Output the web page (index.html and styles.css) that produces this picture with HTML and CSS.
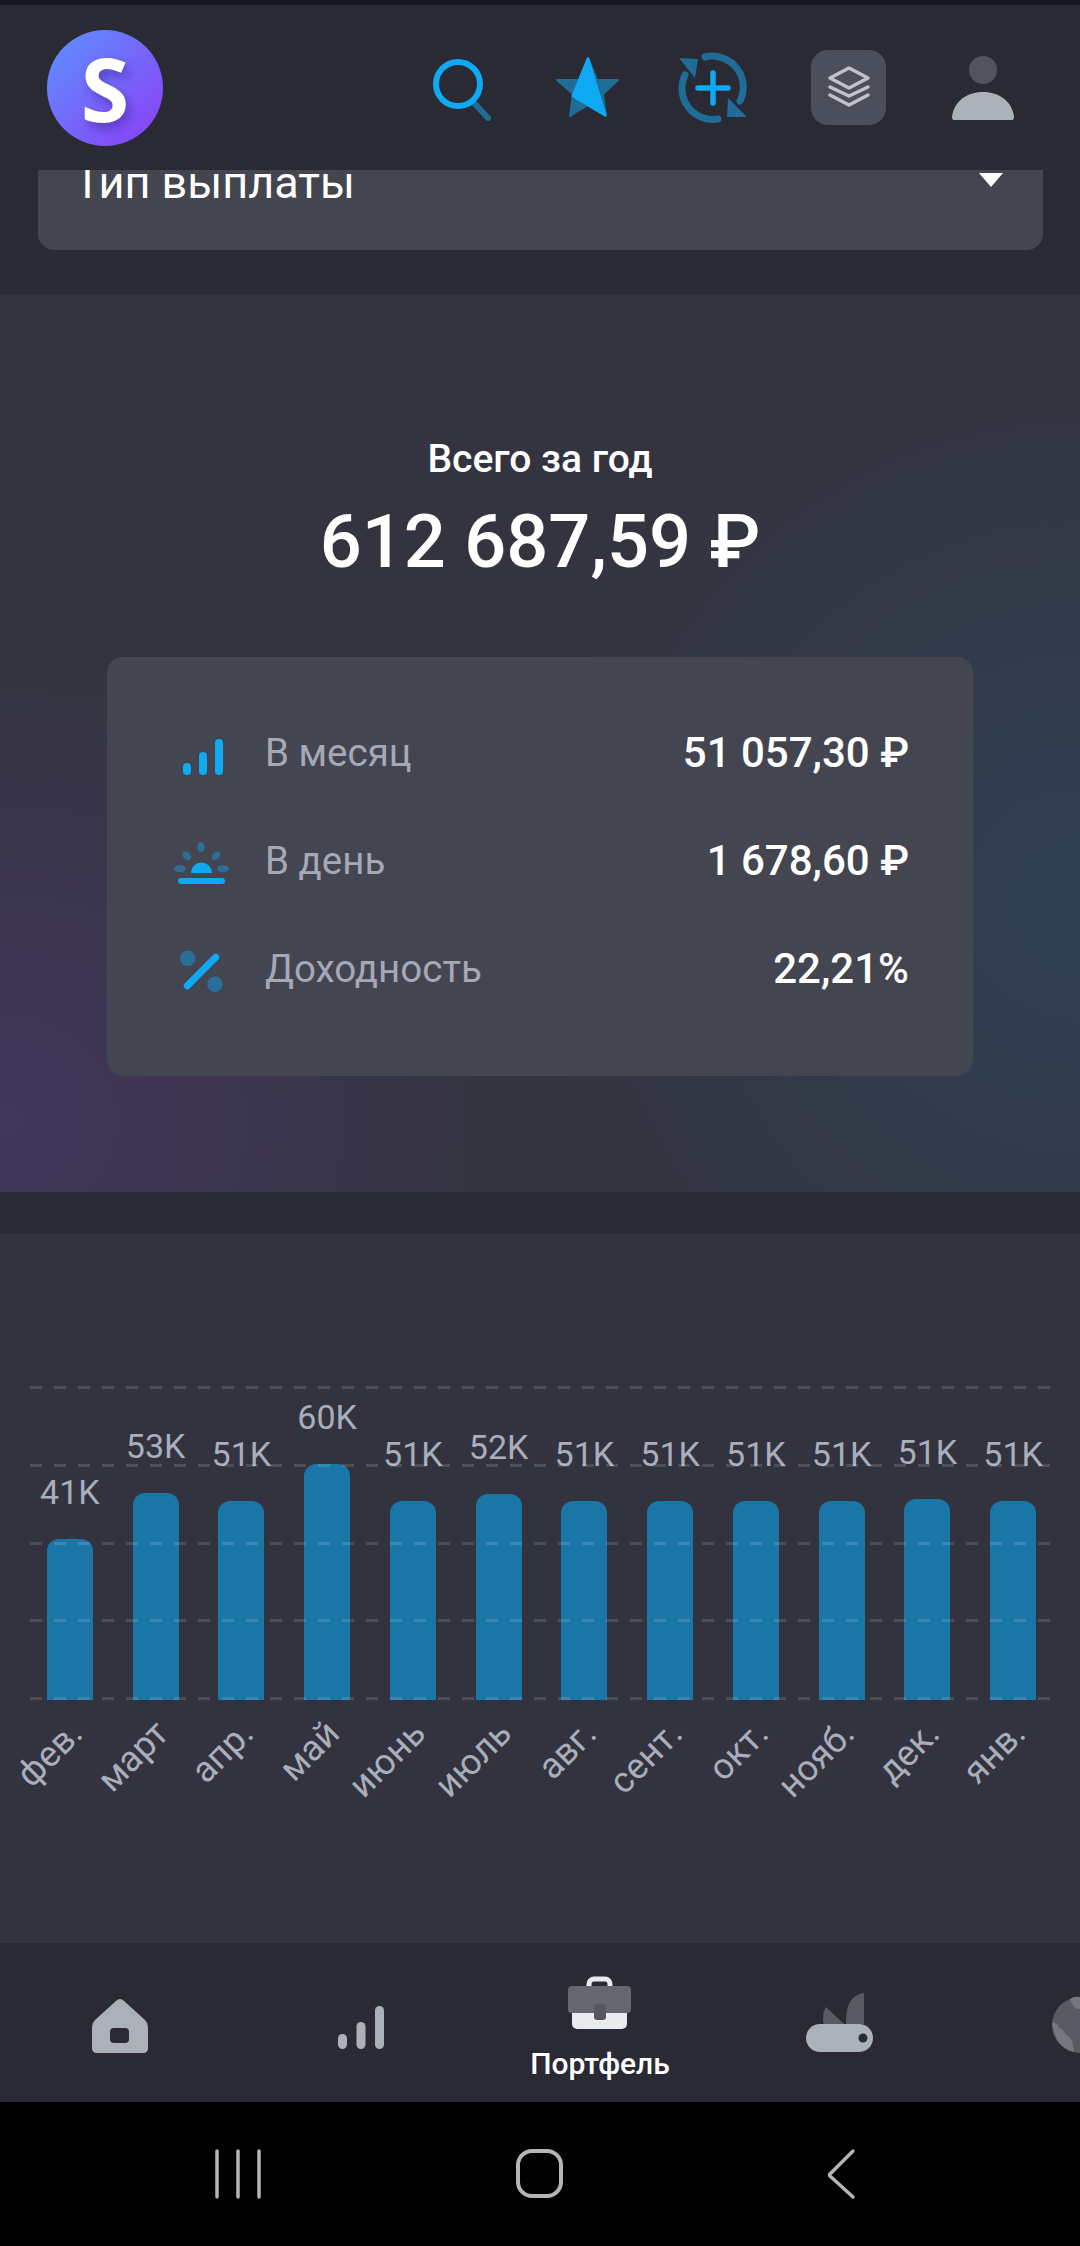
FILE: index.html
```html
<!DOCTYPE html>
<html lang="ru">
<head>
    <meta charset="UTF-8">
    <meta name="viewport" content="width=device-width, initial-scale=1.0">
    <title>Портфель</title>
    <link rel="stylesheet" href="styles.css">
</head>
<body>
    <div class="status-strip"></div>

    <header class="topbar">
        <div class="logo">S</div>
        <div class="top-icons">
            <div class="top-slot">
                <svg class="top-icon" viewBox="0 0 100 100">
                    <path d="M67 66 L80 80" fill="none" stroke="#1f6c96" stroke-width="6" stroke-linecap="round"/>
                    <circle cx="50" cy="46" r="22" fill="none" stroke="#0fa8f3" stroke-width="6"/>
                </svg>
            </div>
            <div class="top-slot">
                <svg class="top-icon" viewBox="0 0 100 100">
                    <path d="M50 20 L59 42 L80 42 L65 56 L68 78 L50 67 L32 78 L35 56 L19 42 L41 42 Z" fill="#1f6c96" stroke="#1f6c96" stroke-width="2" stroke-linejoin="round"/>
                    <path d="M50 21 L67 77 L35 58 Z" fill="#0fa8f3" stroke="#0fa8f3" stroke-width="3" stroke-linejoin="round"/>
                </svg>
            </div>
            <div class="top-slot">
                <svg class="top-icon" viewBox="0 0 100 100">
                    <path d="M37 19 A31 31 0 0 1 72 63" fill="none" stroke="#1f6c96" stroke-width="7" stroke-linecap="round"/>
                    <path d="M17 37 A31 31 0 0 0 50 81" fill="none" stroke="#1f6c96" stroke-width="7" stroke-linecap="round"/>
                    <path d="M11 20 L30 21 L27 40 Z" fill="#1f6c96"/>
                    <path d="M79 79 L59 79 L60 60 Z" fill="#1f6c96"/>
                    <path d="M30 50 H60 M45 35 V65" fill="none" stroke="#0fa8f3" stroke-width="5.5" stroke-linecap="round"/>
                </svg>
            </div>
            <div class="top-slot">
                <div class="layers-btn">
                    <svg class="layers-icon" viewBox="0 0 75 75">
                        <path d="M38 18 L57 28 L38 38 L19 28 Z" fill="none" stroke="#bfc3ca" stroke-width="3.5" stroke-linejoin="round"/>
                        <path d="M19 37 L38 46 L57 37 M19 45 L38 55 L57 45" fill="none" stroke="#bfc3ca" stroke-width="3.5" stroke-linecap="round" stroke-linejoin="round"/>
                    </svg>
                </div>
            </div>
            <div class="top-slot">
                <svg class="top-icon" viewBox="0 0 100 100">
                    <circle cx="55" cy="32" r="14" fill="#51535e"/>
                    <path d="M24 79 C26 63 39 54 55 54 C71 54 84 63 86 79 Q86 82 84 82 H26 Q24 82 24 79 Z" fill="#aab1b8"/>
                </svg>
            </div>
        </div>
    </header>

    <div class="filter-wrap">
        <div class="filter">
            <div class="filter-row">
                <span class="filter-name">Тип выплаты</span>
                <span class="filter-arrow"></span>
            </div>
        </div>
    </div>

    <section class="summary">
        <div class="summary-title">Всего за год</div>
        <div class="summary-total">612 687,59 ₽</div>
        <div class="stat-card">
            <div class="stat-row">
                <svg class="stat-icon" viewBox="0 0 60 60">
                    <rect x="12" y="41" width="8" height="12" rx="4" fill="#0fa8f3"/>
                    <rect x="28" y="30" width="8" height="23" rx="4" fill="#0fa8f3"/>
                    <rect x="44" y="17" width="8" height="36" rx="4" fill="#0fa8f3"/>
                </svg>
                <span class="stat-label">В месяц</span>
                <span class="stat-value">51 057,30 ₽</span>
            </div>
            <div class="stat-row">
                <svg class="stat-icon" viewBox="0 0 60 60">
                    <ellipse cx="30" cy="17" rx="3.7" ry="5" fill="#2b6f99"/>
                    <ellipse cx="15.7" cy="25.7" rx="3.5" ry="5" transform="rotate(-45 15.7 25.7)" fill="#2b6f99"/>
                    <ellipse cx="45" cy="25.7" rx="3.5" ry="5" transform="rotate(45 45 25.7)" fill="#2b6f99"/>
                    <ellipse cx="9" cy="38.7" rx="6" ry="3.5" fill="#2b6f99"/>
                    <ellipse cx="52" cy="38.7" rx="6" ry="3.5" fill="#2b6f99"/>
                    <path d="M20 43 A10.5 10.5 0 0 1 41 43 Z" fill="#0fa8f3"/>
                    <rect x="7" y="48" width="47" height="6" rx="3" fill="#0fa8f3"/>
                </svg>
                <span class="stat-label">В день</span>
                <span class="stat-value">1 678,60 ₽</span>
            </div>
            <div class="stat-row">
                <svg class="stat-icon" viewBox="0 0 60 60">
                    <circle cx="16.7" cy="20.3" r="7.7" fill="#2b6f99"/>
                    <circle cx="44" cy="46.3" r="7.7" fill="#2b6f99"/>
                    <path d="M16.3 47.7 L44.7 19.3" stroke="#0fa8f3" stroke-width="7" stroke-linecap="round"/>
                </svg>
                <span class="stat-label">Доходность</span>
                <span class="stat-value">22,21%</span>
            </div>
        </div>
    </section>

    <section class="chart">
        <div class="plot">
            <div class="cols">
                <div class="col"><span class="col-value">41K</span><div class="bar" style="height: 161px"></div></div>
                <div class="col"><span class="col-value">53K</span><div class="bar" style="height: 207px"></div></div>
                <div class="col"><span class="col-value">51K</span><div class="bar" style="height: 199px"></div></div>
                <div class="col"><span class="col-value">60K</span><div class="bar" style="height: 236px"></div></div>
                <div class="col"><span class="col-value">51K</span><div class="bar" style="height: 199px"></div></div>
                <div class="col"><span class="col-value">52K</span><div class="bar" style="height: 206px"></div></div>
                <div class="col"><span class="col-value">51K</span><div class="bar" style="height: 199px"></div></div>
                <div class="col"><span class="col-value">51K</span><div class="bar" style="height: 199px"></div></div>
                <div class="col"><span class="col-value">51K</span><div class="bar" style="height: 199px"></div></div>
                <div class="col"><span class="col-value">51K</span><div class="bar" style="height: 199px"></div></div>
                <div class="col"><span class="col-value">51K</span><div class="bar" style="height: 201px"></div></div>
                <div class="col"><span class="col-value">51K</span><div class="bar" style="height: 199px"></div></div>
            </div>
            <div class="grid">
                <div class="grid-line"></div>
                <div class="grid-line"></div>
                <div class="grid-line"></div>
                <div class="grid-line"></div>
                <div class="grid-line"></div>
            </div>
        </div>
        <div class="months">
            <div class="month-cell"><span class="month">фев.</span></div>
            <div class="month-cell"><span class="month">март</span></div>
            <div class="month-cell"><span class="month">апр.</span></div>
            <div class="month-cell"><span class="month">май</span></div>
            <div class="month-cell"><span class="month">июнь</span></div>
            <div class="month-cell"><span class="month">июль</span></div>
            <div class="month-cell"><span class="month">авг.</span></div>
            <div class="month-cell"><span class="month">сент.</span></div>
            <div class="month-cell"><span class="month">окт.</span></div>
            <div class="month-cell"><span class="month">нояб.</span></div>
            <div class="month-cell"><span class="month">дек.</span></div>
            <div class="month-cell"><span class="month">янв.</span></div>
        </div>
    </section>

    <nav class="tabs">
        <div class="tab">
            <svg class="tab-icon" viewBox="0 0 80 80">
                <path d="M36 15 Q40 11 44 15 L65 34 Q68 37 68 41 V62 Q68 67 63 67 H17 Q12 67 12 62 V41 Q12 37 15 34 Z" fill="#aab1b8"/>
                <rect x="30" y="42" width="19" height="15" rx="4" fill="#292a33"/>
            </svg>
        </div>
        <div class="tab">
            <svg class="tab-icon" viewBox="0 0 80 80">
                <rect x="18" y="48" width="9" height="15" rx="4.5" fill="#aab1b8"/>
                <rect x="36.500" y="36" width="9" height="27" rx="4.5" fill="#aab1b8"/>
                <rect x="55" y="20" width="9" height="43" rx="4.5" fill="#aab1b8"/>
            </svg>
        </div>
        <div class="tab tab-active">
            <svg class="tab-icon-active" viewBox="0 0 80 60">
                <rect x="29" y="6" width="21" height="14" rx="5" fill="none" stroke="#e9ebee" stroke-width="5"/>
                <rect x="12" y="30" width="55" height="26" rx="5" fill="#e9ebee"/>
                <path d="M12 13 H67 Q71 13 71 17 V37 Q71 40 67 40 H12 Q8 40 8 37 V17 Q8 13 12 13 Z" fill="#66676e"/>
                <rect x="34" y="31" width="12" height="16" rx="3" fill="#57585f"/>
            </svg>
            <span class="tab-label">Портфель</span>
        </div>
        <div class="tab">
            <svg class="tab-icon" viewBox="0 0 80 80">
                <path d="M46 38 C46 20 50 9 64 7 V38 Z" fill="#585a63"/>
                <path d="M23 35 Q23 25 26 21 L44 38 H25 Q23 38 23 35 Z" fill="#585a63"/>
                <rect x="6" y="38" width="67" height="28" rx="14" fill="#aab1b8"/>
                <circle cx="63" cy="52" r="4.500" fill="#292a33"/>
            </svg>
        </div>
        <div class="tab">
            <svg class="tab-icon" viewBox="0 0 80 80">
                <circle cx="40" cy="39" r="28" fill="#585a63"/>
                <path d="M12 37 Q17 35 19 42 Q24 42 25 48 Q33 52 33 60 L34 66 Q16 62 12 37 Z" fill="#75777f"/>
                <path d="M30 13 Q34 10 40 11 V23 Q33 24 30 13 Z" fill="#75777f"/>
            </svg>
        </div>
    </nav>

    <footer class="sys-bar">
        <div class="sys-slot">
            <svg class="sys-icon" viewBox="0 0 60 60">
                <path d="M9 7 V53 M30 7 V53 M51 7 V53" fill="none" stroke="#b5b5b5" stroke-width="3.500" stroke-linecap="round"/>
            </svg>
        </div>
        <div class="sys-slot">
            <svg class="sys-icon" viewBox="0 0 60 60">
                <rect x="8" y="7" width="43" height="45" rx="14" fill="none" stroke="#b5b5b5" stroke-width="4"/>
            </svg>
        </div>
        <div class="sys-slot">
            <svg class="sys-icon" viewBox="0 0 60 60">
                <path d="M41 7 L18 30 Q17 31 18 32 L41 53" fill="none" stroke="#b5b5b5" stroke-width="3.500" stroke-linecap="round" stroke-linejoin="round"/>
            </svg>
        </div>
    </footer>
</body>
</html>
```

FILE: styles.css
```css
* {
    box-sizing: border-box;
}
body {
    margin: 0;
    height: 2246px;
    overflow: hidden;
    background-color: #292a33;
    font-family: Roboto, "Noto Sans", sans-serif;
    color: white;
}
.status-strip {
    height: 5px;
    background-color: #151821;
}

/* top bar */
.topbar {
    display: flex;
    align-items: center;
    justify-content: space-between;
    height: 165px;
    padding: 0 37px 0 47px;
    background-color: #292a33;
}
.logo {
    display: flex;
    align-items: center;
    justify-content: center;
    width: 116px;
    height: 116px;
    border-radius: 50%;
    background: linear-gradient(135deg, #5c92ff, #8c3df5);
    font-family: "Open Sans", sans-serif;
    font-size: 88px;
    font-weight: 700;
    text-shadow: 4px 6px 10px rgba(60, 30, 140, 0.45);
}
.top-icons {
    display: flex;
    align-items: center;
}
.top-slot {
    display: flex;
    align-items: center;
    justify-content: center;
    width: 130px;
    height: 100px;
}
.top-icon {
    width: 100px;
    height: 100px;
}
.layers-btn {
    width: 75px;
    height: 75px;
    border-radius: 17px;
    background-color: #4b4e5b;
}
.layers-icon {
    display: block;
    width: 75px;
    height: 75px;
}

/* dropdown cut by the top bar */
.filter-wrap {
    height: 124px;
    padding: 0 37px 0 38px;
}
.filter {
    height: 80px;
    overflow: hidden;
    border-radius: 0 0 16px 16px;
    background-color: #434551;
}
.filter-row {
    display: flex;
    align-items: center;
    justify-content: space-between;
    margin-top: -13px;
    padding: 0 40px 0 36px;
    line-height: 52px;
    font-size: 45px;
}
.filter-arrow {
    margin-top: -6px;
    border-top: 14px solid white;
    border-left: 12.5px solid transparent;
    border-right: 12.5px solid transparent;
}

/* totals */
.summary {
    display: flex;
    flex-direction: column;
    align-items: center;
    height: 898px;
    margin-bottom: 42px;
    padding-top: 143px;
    background-color: #33343f;
    background-image:
        radial-gradient(ellipse 520px 480px at 0% 92%, rgba(80, 56, 120, 0.5), transparent),
        radial-gradient(ellipse 560px 560px at 100% 68%, rgba(44, 76, 104, 0.5), transparent);
}
.summary-title {
    font-size: 39px;
    font-weight: 500;
    line-height: 44px;
}
.summary-total {
    margin-top: 19px;
    font-size: 74px;
    font-weight: 500;
    line-height: 84px;
}
.stat-card {
    width: 866px;
    height: 419px;
    margin-top: 73px;
    padding: 41px 64px 0;
    border-radius: 16px;
    background-color: #434551;
}
.stat-row {
    display: flex;
    align-items: center;
    height: 108px;
}
.stat-icon {
    width: 60px;
    height: 60px;
    margin-right: 34px;
}
.stat-label {
    flex: 1;
    font-size: 38.5px;
    color: #a4a9b5;
}
.stat-value {
    font-size: 42px;
    font-weight: 500;
}

/* bar chart */
.chart {
    height: 709px;
    padding-top: 152px;
    background-color: #32333e;
}
.plot {
    position: relative;
    height: 314px;
}
.cols {
    display: flex;
    height: 100%;
    margin: 0 24px 0 27px;
}
.col {
    flex: 1;
    display: flex;
    flex-direction: column;
    align-items: center;
    justify-content: flex-end;
}
.col-value {
    margin-bottom: 28px;
    font-size: 34px;
    line-height: 38px;
    color: #a8aebb;
}
.bar {
    width: 46px;
    border-radius: 12px 12px 0 0;
    background-color: #1a76a6;
}
.grid {
    position: absolute;
    top: 0;
    bottom: 0;
    left: 30px;
    right: 30px;
    display: flex;
    flex-direction: column;
    justify-content: space-between;
}
.grid-line {
    height: 3px;
    background: repeating-linear-gradient(90deg, rgba(255, 255, 255, 0.13) 0 12px, transparent 12px 24px);
}
.months {
    display: flex;
    margin: 27px 24px 0 27px;
}
.month-cell {
    flex: 1;
    display: flex;
    justify-content: center;
}
.month {
    display: flex;
    justify-content: flex-end;
    width: 0;
    height: 0;
    margin-left: 12px;
    line-height: 0;
    white-space: nowrap;
    font-size: 36px;
    color: #a8aebb;
    transform: rotate(-45deg);
    transform-origin: 0 0;
}

/* bottom tabs */
.tabs {
    display: flex;
    height: 159px;
    overflow: hidden;
    background-color: #292a33;
}
.tab {
    flex: 0 0 240px;
    display: flex;
    flex-direction: column;
    align-items: center;
    padding-top: 43px;
}
.tab-active {
    padding-top: 30px;
}
.tab-icon {
    width: 80px;
    height: 80px;
}
.tab-icon-active {
    width: 80px;
    height: 60px;
}
.tab-label {
    margin-top: 13px;
    font-size: 30px;
    font-weight: 500;
    line-height: 36px;
}

/* system navigation */
.sys-bar {
    display: flex;
    align-items: center;
    justify-content: center;
    height: 144px;
    background-color: black;
}
.sys-slot {
    display: flex;
    justify-content: center;
    width: 302px;
}
.sys-icon {
    width: 60px;
    height: 60px;
}
```
